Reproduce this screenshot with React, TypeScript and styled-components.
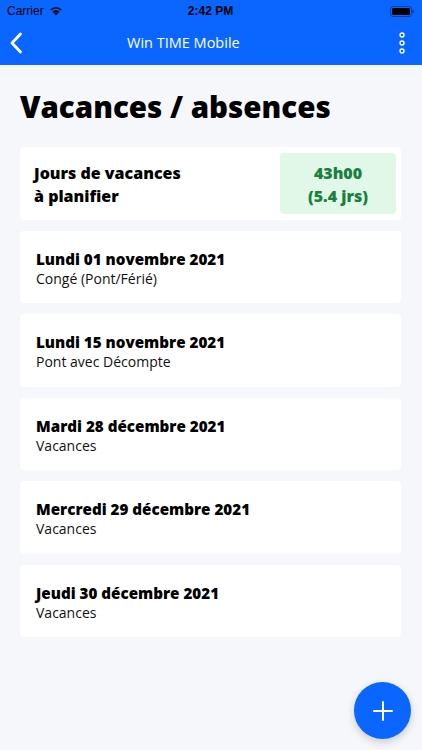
import React from "react";
import styled, { createGlobalStyle } from "styled-components";

const Global = createGlobalStyle`
  html, body { margin: 0; padding: 0; }
  body { background: #f6f7fb; font-family: "Open Sans", "Noto Sans", sans-serif; -webkit-font-smoothing: antialiased; }
  * { box-sizing: border-box; }
`;

const BLUE = "#0a66ff";

const Screen = styled.div`
  width: 422px;
  height: 750px;
  position: relative;
  background: #f6f7fb;
  overflow: hidden;
`;

const Header = styled.header`
  background: ${BLUE};
  color: #fff;
  height: 65px;
  display: flex;
  flex-direction: column;
`;

const StatusBar = styled.div`
  height: 22px;
  display: grid;
  grid-template-columns: 1fr auto 1fr;
  align-items: center;
  padding: 0 8px 0 7px;
  font-family: "Liberation Sans", Arial, sans-serif;
  font-size: 12px;
  color: #000;
`;

const StatusLeft = styled.div`
  display: flex;
  align-items: center;
  gap: 5px;
`;

const StatusTime = styled.div`
  font-weight: 700;
  font-size: 12px;
`;

const StatusRight = styled.div`
  display: flex;
  justify-content: flex-end;
`;

const NavBar = styled.nav`
  flex: 1;
  display: flex;
  align-items: center;
  padding-bottom: 2px;
`;

const NavTitle = styled.div`
  flex: 1;
  padding-left: 94px;
  font-size: 14.5px;
  color: #fff;
`;

const IconCell = styled.div<{ $align: "start" | "end" }>`
  width: 24px;
  display: flex;
  justify-content: ${(p) => (p.$align === "start" ? "flex-start" : "flex-end")};
  margin: ${(p) => (p.$align === "start" ? "0 0 0 9px" : "0 17px 0 0")};
`;

const Content = styled.main`
  padding: 21px 21px 0 20px;
  display: flex;
  flex-direction: column;
`;

const PageTitle = styled.h1`
  margin: 0 0 19px 0;
  font-size: 29.5px;
  font-weight: 800;
  color: #000;
  line-height: 42px;
`;

const List = styled.div`
  display: flex;
  flex-direction: column;
  gap: 11px;
`;

const Card = styled.div`
  background: #fff;
  border-radius: 4px;
  height: 72.5px;
`;

const SummaryCard = styled(Card)`
  display: flex;
  align-items: center;
  justify-content: space-between;
  padding: 0 5px 0 14px;
`;

const SummaryLabel = styled.div`
  font-size: 16px;
  font-weight: 800;
  line-height: 23px;
  color: #000;
  padding-top: 3px;
`;

const Badge = styled.div`
  width: 116px;
  height: 61px;
  background: #e1f8e8;
  border-radius: 4px;
  display: flex;
  flex-direction: column;
  align-items: center;
  justify-content: center;
  color: #17803f;
  font-size: 16px;
  font-weight: 800;
  line-height: 23px;
  padding-top: 3px;
`;

const EntryCard = styled(Card)`
  display: flex;
  flex-direction: column;
  justify-content: center;
  padding: 4px 16px 0 16px;
`;

const EntryDate = styled.div`
  font-size: 15.2px;
  font-weight: 800;
  line-height: 20px;
  color: #000;
`;

const EntryType = styled.div`
  font-size: 14px;
  line-height: 20px;
  color: #111;
`;

const Fab = styled.button`
  position: absolute;
  right: 11px;
  bottom: 11px;
  width: 57px;
  height: 57px;
  border-radius: 50%;
  background: ${BLUE};
  border: none;
  display: flex;
  align-items: center;
  justify-content: center;
  box-shadow: 0 3px 8px rgba(0, 0, 0, 0.18);
  padding: 0;
`;

const entries = [
  { date: "Lundi 01 novembre 2021", type: "Congé (Pont/Férié)" },
  { date: "Lundi 15 novembre 2021", type: "Pont avec Décompte" },
  { date: "Mardi 28 décembre 2021", type: "Vacances" },
  { date: "Mercredi 29 décembre 2021", type: "Vacances" },
  { date: "Jeudi 30 décembre 2021", type: "Vacances" },
];

export default function App() {
  return (
    <Screen>
      <Global />
      <Header>
        <StatusBar>
          <StatusLeft>
            <span>Carrier</span>
            <svg width="14" height="10" viewBox="0 0 14 10">
              <path d="M7 9.6 L4.9 7.3 A3 3 0 0 1 9.1 7.3 Z" fill="#000" />
              <path d="M3.4 5.8 A5.2 5.2 0 0 1 10.6 5.8 L9.6 6.9 A3.8 3.8 0 0 0 4.4 6.9 Z" fill="#000" />
              <path d="M1.2 3.5 A8.3 8.3 0 0 1 12.8 3.5 L11.8 4.6 A6.8 6.8 0 0 0 2.2 4.6 Z" fill="#000" />
            </svg>
          </StatusLeft>
          <StatusTime>2:42 PM</StatusTime>
          <StatusRight>
            <svg width="24" height="11" viewBox="0 0 24 11">
              <rect x="0.5" y="0.5" width="21" height="10" rx="2.5" fill="none" stroke="rgba(0,0,0,0.35)" />
              <rect x="2" y="2" width="18" height="7" rx="1.3" fill="#000" />
              <rect x="22.3" y="3.5" width="1.4" height="4" rx="0.7" fill="rgba(0,0,0,0.4)" />
            </svg>
          </StatusRight>
        </StatusBar>
        <NavBar>
          <IconCell $align="start">
            <svg width="14" height="22" viewBox="0 0 14 22">
              <path d="M11.5 2 L3 11 L11.5 20" fill="none" stroke="#fff" strokeWidth="2.8" strokeLinecap="round" strokeLinejoin="round" />
            </svg>
          </IconCell>
          <NavTitle>Win TIME Mobile</NavTitle>
          <IconCell $align="end">
            <svg width="6" height="22" viewBox="0 0 6 22">
              <circle cx="3" cy="3" r="2" fill="none" stroke="#fff" strokeWidth="1.4" />
              <circle cx="3" cy="11" r="2" fill="none" stroke="#fff" strokeWidth="1.4" />
              <circle cx="3" cy="19" r="2" fill="none" stroke="#fff" strokeWidth="1.4" />
            </svg>
          </IconCell>
        </NavBar>
      </Header>
      <Content>
        <PageTitle>Vacances / absences</PageTitle>
        <List>
          <SummaryCard>
            <SummaryLabel>
              Jours de vacances
              <br />à planifier
            </SummaryLabel>
            <Badge>
              <span>43h00</span>
              <span>(5.4 jrs)</span>
            </Badge>
          </SummaryCard>
          {entries.map((e) => (
            <EntryCard key={e.date}>
              <EntryDate>{e.date}</EntryDate>
              <EntryType>{e.type}</EntryType>
            </EntryCard>
          ))}
        </List>
      </Content>
      <Fab aria-label="Ajouter">
        <svg width="20" height="20" viewBox="0 0 20 20">
          <path d="M10 1 V19 M1 10 H19" stroke="#fff" strokeWidth="2" strokeLinecap="round" />
        </svg>
      </Fab>
    </Screen>
  );
}
